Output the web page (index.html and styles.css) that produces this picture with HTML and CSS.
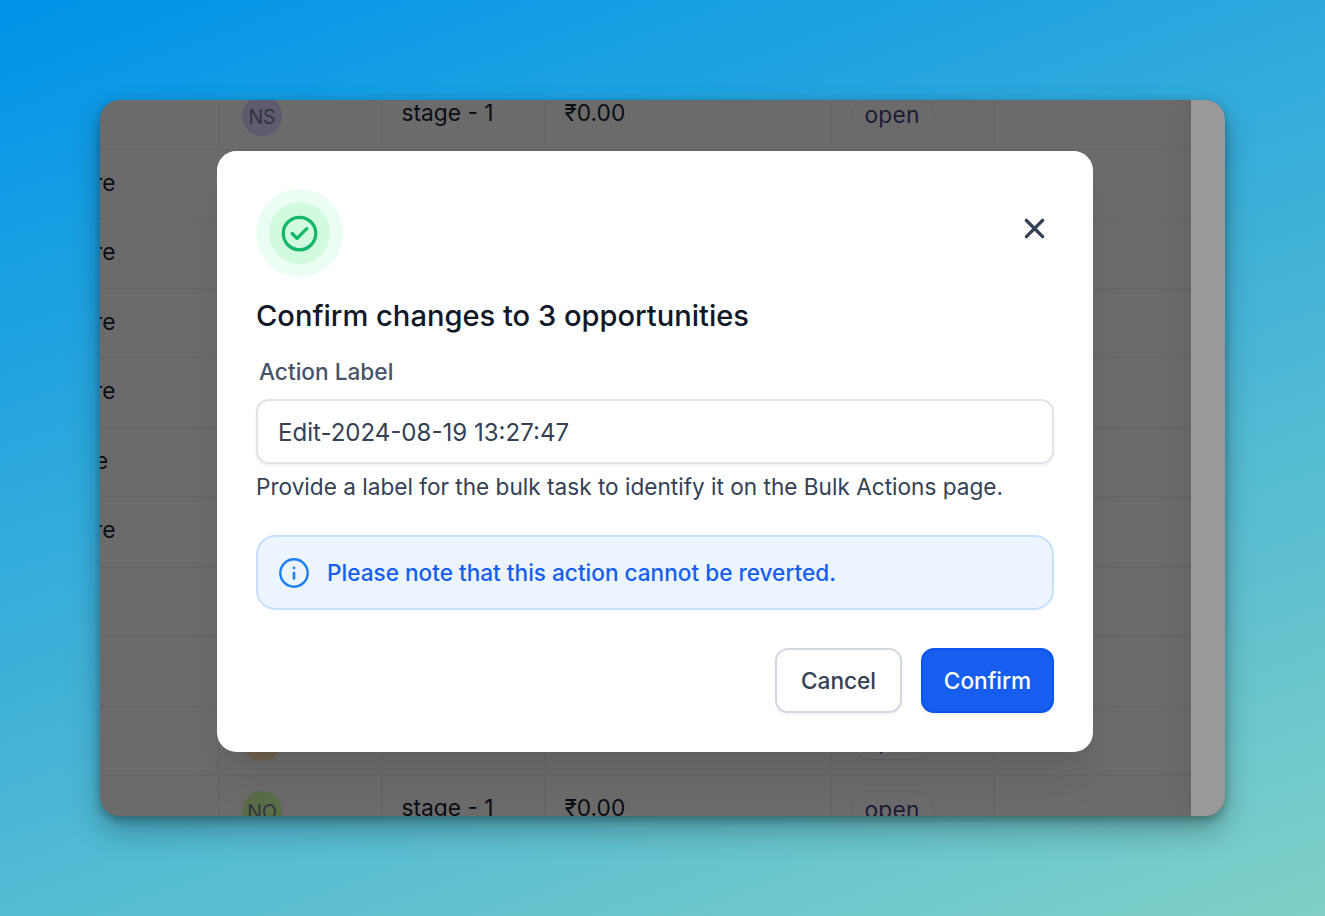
FILE: index.html
```html
<!DOCTYPE html>
<html lang="en">
<head>
    <meta charset="UTF-8">
    <meta name="viewport" content="width=device-width, initial-scale=1.0">
    <title>Confirm changes</title>
    <link rel="stylesheet" href="styles.css">
</head>
<body>
    <div class="window">
        <div class="table">
            <div class="row">
                <div class="cell"></div>
                <div class="cell"><span class="avatar purple">NS</span></div>
                <div class="cell"><span class="text">stage - 1</span></div>
                <div class="cell"><span class="text">₹0.00</span></div>
                <div class="cell"><span class="status">open</span></div>
                <div class="cell"></div>
            </div>
            <div class="row"><div class="cell name"><span class="text">re</span></div></div>
            <div class="row"><div class="cell name"><span class="text">re</span></div></div>
            <div class="row"><div class="cell name"><span class="text">re</span></div></div>
            <div class="row"><div class="cell name"><span class="text">re</span></div></div>
            <div class="row"><div class="cell name short"><span class="text">e</span></div></div>
            <div class="row"><div class="cell name"><span class="text">re</span></div></div>
            <div class="row"><div class="cell"></div></div>
            <div class="row"><div class="cell"></div></div>
            <div class="row">
                <div class="cell"></div>
                <div class="cell"><span class="avatar orange"></span></div>
                <div class="cell"></div>
                <div class="cell"></div>
                <div class="cell"><span class="status">open</span></div>
                <div class="cell"></div>
            </div>
            <div class="row">
                <div class="cell"></div>
                <div class="cell"><span class="avatar green">NO</span></div>
                <div class="cell"><span class="text">stage - 1</span></div>
                <div class="cell"><span class="text">₹0.00</span></div>
                <div class="cell"><span class="status">open</span></div>
                <div class="cell"></div>
            </div>
        </div>
        <div class="side"></div>

        <div class="modal">
            <div class="modal-header">
                <div class="success-icon">
                    <svg width="39" height="39" viewBox="0 0 24 24" fill="none" stroke="#12b76a" stroke-width="2" stroke-linecap="round" stroke-linejoin="round">
                        <circle cx="12" cy="12" r="10"/>
                        <path d="M7.5 12l3 3 6-6"/>
                    </svg>
                </div>
                <button class="close" aria-label="Close">
                    <svg width="39" height="39" viewBox="0 0 24 24" fill="none" stroke="#344054" stroke-width="2.1" stroke-linecap="round">
                        <path d="M17 7L7 17M7 7l10 10"/>
                    </svg>
                </button>
            </div>
            <h1 class="title">Confirm changes to 3 opportunities</h1>
            <label class="label" for="action-label">Action Label</label>
            <input class="input" id="action-label" type="text" value="Edit-2024-08-19 13:27:47">
            <p class="help">Provide a label for the bulk task to identify it on the Bulk Actions page.</p>
            <div class="alert">
                <svg width="32" height="32" viewBox="0 0 32 32" fill="none" stroke="#1c7ff2" stroke-linecap="round">
                    <circle cx="16" cy="16" r="13.7" stroke-width="2.4"/>
                    <path d="M16 16v5.4" stroke-width="2.6"/>
                    <path d="M16 10.9v.1" stroke-width="2.6"/>
                </svg>
                <span>Please note that this action cannot be reverted.</span>
            </div>
            <div class="actions">
                <button class="btn cancel">Cancel</button>
                <button class="btn confirm">Confirm</button>
            </div>
        </div>
    </div>
</body>
</html>
```

FILE: styles.css
```css
* {
    box-sizing: border-box;
}

body {
    margin: 0;
    height: 916px;
    padding: 100px 99.5px;
    overflow: hidden;
    font-family: 'Inter', sans-serif;
    background: linear-gradient(160deg, #0093e9 0%, #80d0c7 100%);
}

.window {
    position: relative;
    display: flex;
    width: 1125.5px;
    height: 716px;
    border-radius: 20px;
    overflow: hidden;
    background-color: #6b6b6b;
    box-shadow: 0 14px 30px rgba(0, 0, 0, 0.28), 0 4px 10px rgba(0, 0, 0, 0.28);
}

.table {
    width: 1091.5px;
    margin-top: -19px;
}

.row {
    display: grid;
    grid-template-columns: 120px 163px 163px 286px 163px 1fr;
    height: 69.5px;
    border-bottom: 2px solid #676767;
}

.cell {
    display: flex;
    align-items: center;
    padding-left: 19px;
    border-right: 2px solid #676767;
}

.cell:last-child {
    border-right: none;
}

.cell.name {
    padding-left: 0;
    margin-left: -5.5px;
    border-right: none;
}

.cell.name.short {
    margin-left: -4.5px;
}

.text {
    margin-top: -4px;
    font-size: 22.75px;
    color: #0a0d14;
}

.avatar {
    display: flex;
    align-items: center;
    justify-content: center;
    width: 40px;
    height: 40px;
    margin-left: 3.5px;
    margin-top: 2px;
    padding-top: 2px;
    border-radius: 50%;
    font-size: 19.5px;
    color: #303540;
}

.purple {
    background-color: #5f5a6d;
}

.orange {
    background-color: #6f604b;
}

.green {
    background-color: #5a6d48;
}

.status {
    padding: 0 13px;
    margin-top: 1px;
    border: 1px solid #646464;
    border-radius: 19px;
    line-height: 36px;
    font-size: 22.75px;
    letter-spacing: 0.2px;
    color: #1b1b37;
}

.side {
    flex: 1;
    background-color: #999;
    box-shadow: 0 0 32px rgba(0, 0, 0, 0.12);
}

.modal {
    position: absolute;
    top: 50.5px;
    left: 117.5px;
    width: 875.5px;
    height: 601px;
    padding: 38.5px 39px;
    border-radius: 19.5px;
    background-color: #fff;
    box-shadow: 0 32px 39px -6px rgba(16, 24, 40, 0.08), 0 13px 13px -6px rgba(16, 24, 40, 0.03);
}

.modal-header {
    display: flex;
    justify-content: space-between;
    align-items: flex-start;
}

.success-icon {
    display: flex;
    align-items: center;
    justify-content: center;
    width: 87px;
    height: 88px;
    border: 13px solid #ecfdf3;
    border-radius: 50%;
    background-color: #d1fadf;
}

.close {
    display: flex;
    margin-top: 20px;
    padding: 0;
    border: none;
    background: none;
}

.title {
    margin: 15.5px 0 0;
    font-size: 29.1px;
    font-weight: 500;
    line-height: 45px;
    color: #101828;
}

.label {
    display: block;
    margin: 16px 0 0 3px;
    font-size: 22.65px;
    font-weight: 500;
    line-height: 36px;
    color: #475467;
}

.input {
    display: block;
    width: 100%;
    height: 65px;
    margin-top: 9.5px;
    padding: 2px 20px 0;
    border: 2px solid #e2e2e8;
    border-radius: 13px;
    font-family: inherit;
    font-size: 24.05px;
    color: #344054;
    box-shadow: 0 2px 3px rgba(16, 24, 40, 0.06);
}

.help {
    margin: 5px 0 0;
    font-size: 22.6px;
    line-height: 36px;
    color: #344054;
}

.alert {
    display: flex;
    align-items: center;
    gap: 17px;
    height: 75px;
    margin-top: 30px;
    padding: 0 20px;
    border: 2px solid #c8e0fc;
    border-radius: 19.5px;
    background-color: #ebf4ff;
    font-size: 22.6px;
    font-weight: 500;
    color: #155eef;
}

.actions {
    display: flex;
    justify-content: flex-end;
    gap: 19px;
    margin-top: 38px;
}

.btn {
    height: 65px;
    padding: 0 0 0 1px;
    border-radius: 13px;
    font-family: inherit;
    font-size: 22.65px;
    font-weight: 500;
    box-shadow: 0 2px 3px rgba(16, 24, 40, 0.05);
}

.cancel {
    width: 127px;
    border: 2px solid #d3d8e0;
    background-color: #fff;
    color: #344054;
}

.confirm {
    width: 133px;
    border: 2px solid #0b54ec;
    background-color: #155eef;
    color: #fff;
}
```
